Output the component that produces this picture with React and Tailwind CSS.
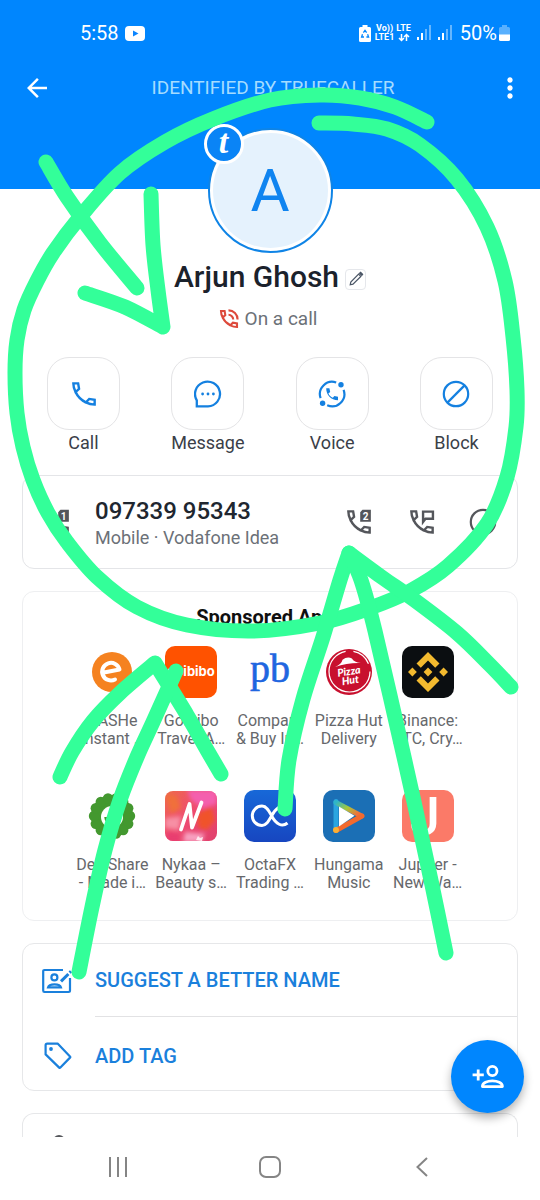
import React from "react";
import { MdArrowBack, MdMoreVert } from "react-icons/md";

/* ---------- icons ---------- */

function Handset({ children, className, strokeWidth = 1.8 }) {
  return (
    <svg viewBox="0 0 24 24" className={className} fill="none" stroke="currentColor" strokeWidth={strokeWidth} aria-hidden="true">
      <path d="M4 4H7.6L8.3 8.1L5.7 10.6C4.6 8.6 4 6.4 4 4Z" />
      <path d="M5.7 10.6C7.4 14.1 9.9 16.6 13.4 18.3" />
      <path d="M20 20V16.4L15.9 15.7L13.4 18.3C15.4 19.4 17.6 20 20 20Z" />
      {children}
    </svg>
  );
}

function SimHandset({ slot, className }) {
  return (
    <Handset className={className}>
      <path d="M14.6 2.9H20.9V11.8H12.9V4.6Z" fill="currentColor" stroke="none" />
      <text x="16.9" y="10.2" textAnchor="middle" fontFamily="Roboto, sans-serif" fontSize="7.5" fontWeight="700" fill="#fff" stroke="none">
        {slot}
      </text>
    </Handset>
  );
}

function MessageHandset({ className }) {
  return (
    <Handset className={className}>
      <path d="M12.8 12V4.2H20.2V9.6H14.6Z" />
    </Handset>
  );
}

function OnCallIcon({ className }) {
  return (
    <Handset className={className} strokeWidth={2.1}>
      <path d="M11.5 3.4A9 9 0 0 1 20.6 12.5M11.5 7.8A4.7 4.7 0 0 1 16.2 12.5" />
    </Handset>
  );
}

function BubbleIcon({ className }) {
  return (
    <svg viewBox="0 0 28 28" className={className} fill="none" stroke="currentColor" strokeWidth="2.3" aria-hidden="true">
      <path d="M2.8 26.4V20.4A12.5 12.4 0 1 1 14 26.4Z" />
      <g fill="currentColor" stroke="none">
        <circle cx="8.6" cy="14" r="1.4" />
        <circle cx="14" cy="14" r="1.4" />
        <circle cx="19.4" cy="14" r="1.4" />
      </g>
    </svg>
  );
}

function VoiceIcon({ className }) {
  return (
    <svg viewBox="0 0 28 28" className={className} fill="none" stroke="currentColor" strokeWidth="2.2" aria-hidden="true">
      <path d="M2.6 18.2A12.3 12.3 0 0 1 18.2 2.5M25.6 9.8A12.3 12.3 0 0 1 9.2 25.3" />
      <g fill="currentColor" stroke="none">
        <circle cx="23" cy="4.8" r="2.7" />
        <circle cx="4.6" cy="23.2" r="2.7" />
        <path d="M8.2 8.2H11.4L12.2 12L10.4 13.4C11.4 15.4 12.8 16.8 14.8 17.8L16.4 16L20 16.8V20.2C13 20 8.2 15 8.2 8.2Z" />
      </g>
    </svg>
  );
}

function BlockIcon({ className, strokeWidth = 2.2 }) {
  return (
    <svg viewBox="0 0 28 28" className={className} fill="none" stroke="currentColor" strokeWidth={strokeWidth} aria-hidden="true">
      <circle cx="14" cy="14" r="12.2" />
      <path d="M22.6 5.4L5.4 22.6" />
    </svg>
  );
}

function PencilIcon({ className }) {
  return (
    <svg viewBox="0 0 16 16" className={className} fill="none" stroke="currentColor" strokeWidth="1.2" aria-hidden="true">
      <path d="M2.2 13.8L2.8 11L10.6 3.2L12.8 5.4L5 13.2Z" />
      <path d="M11.6 2.2L12.6 1.4L14.6 3.4L13.8 4.4Z" fill="currentColor" />
    </svg>
  );
}

function SuggestIcon({ className }) {
  return (
    <svg viewBox="0 0 30 26" className={className} fill="none" stroke="currentColor" strokeWidth="2.2" aria-hidden="true">
      <path d="M21 2H2.5Q1.2 2 1.2 3.4V22.6Q1.2 24 2.5 24H26.5Q28 24 28 22.6V10" />
      <circle cx="12.4" cy="9.4" r="3" />
      <path d="M6 19.4C7 15.4 18 15.4 19 19.4Z" />
      <path d="M19 13.4L26.4 6" strokeWidth="3" />
      <path d="M27.6 4.6L29 3.2" strokeWidth="3" />
    </svg>
  );
}

function TagIcon({ className }) {
  return (
    <svg viewBox="0 0 28 28" className={className} fill="none" stroke="currentColor" strokeWidth="2.2" strokeLinejoin="round" aria-hidden="true">
      <path d="M3.2 1.6H13.6L26 14.4Q26.6 15 26 15.6L16.4 25.6Q15.8 26.2 15.2 25.6L1.6 12.4V3.2Q1.6 1.6 3.2 1.6Z" />
      <circle cx="7" cy="7" r="1.9" fill="currentColor" stroke="none" />
    </svg>
  );
}

function AddPersonIcon({ className }) {
  return (
    <svg viewBox="0 0 34 26" className={className} fill="none" stroke="currentColor" strokeWidth="2.8" aria-hidden="true">
      <path d="M7.2 5.4V16.4M1.6 10.9H12.8" />
      <circle cx="21.4" cy="7" r="4.6" />
      <path d="M11.4 22.6C11.4 15 31.4 15 31.4 22.6Z" strokeLinejoin="round" />
    </svg>
  );
}

function SignalIcon() {
  return (
    <svg viewBox="0 0 14 16" className="h-4 w-3.5" fill="#fff" aria-hidden="true">
      <rect x="0" y="12" width="2" height="3" />
      <rect x="4" y="8" width="2" height="7" />
      <rect x="8" y="4" width="2" height="11" opacity="0.4" />
      <rect x="12" y="0" width="2" height="15" opacity="0.4" />
    </svg>
  );
}

/* ---------- app logos ---------- */

function Logo({ children }) {
  return (
    <svg viewBox="0 0 52 52" className="size-[52px] overflow-visible" aria-hidden="true">
      {children}
    </svg>
  );
}

const scallops = Array.from({ length: 14 }, (_, i) => {
  const angle = (i / 14) * Math.PI * 2;
  return [26 + Math.cos(angle) * 18, 26 + Math.sin(angle) * 18];
});

const logos = {
  cashe: (
    <Logo>
      <circle cx="26" cy="26" r="20" fill="#f58220" />
      <path d="M18 26.5L33.5 23.5A8.8 8.8 0 1 0 29 33.5" fill="none" stroke="#fff" strokeWidth="4" strokeLinecap="round" strokeLinejoin="round" />
    </Logo>
  ),
  goibibo: (
    <Logo>
      <rect width="52" height="52" rx="10" fill="#ff5200" />
      <text x="26" y="30" textAnchor="middle" fontFamily="Inter, sans-serif" fontSize="13" fontWeight="700" fill="#fff">goibibo</text>
    </Logo>
  ),
  policy: (
    <Logo>
      <text x="26" y="36" textAnchor="middle" fontFamily="'Liberation Serif', serif" fontSize="40" fill="#1f66e0" stroke="#1f66e0" strokeWidth="0.6">pb</text>
    </Logo>
  ),
  pizza: (
    <Logo>
      <circle cx="26" cy="26" r="23" fill="#c8102e" />
      <circle cx="26.5" cy="25.5" r="20.5" fill="none" stroke="#fff" strokeWidth="1.2" strokeDasharray="92 8 20 9" />
      <g fill="#fff" transform="rotate(-9 26 26)">
        <path d="M13 19Q20 17 21.5 13Q26.5 10 31 13Q32.5 17 39 19Q26 16.5 13 19Z" />
        <text x="26" y="29" textAnchor="middle" fontFamily="Lato, sans-serif" fontSize="10.5" fontStyle="italic" fontWeight="900">Pizza</text>
        <text x="26" y="38" textAnchor="middle" fontFamily="Lato, sans-serif" fontSize="10.5" fontStyle="italic" fontWeight="900">Hut</text>
      </g>
    </Logo>
  ),
  binance: (
    <Logo>
      <rect width="52" height="52" rx="10" fill="#0b0e11" />
      <g fill="#f3ba2f">
        <path d="M26 6L37.5 17.5L33.2 21.8L26 14.6L18.8 21.8L14.5 17.5Z" />
        <path d="M26 46L37.5 34.5L33.2 30.2L26 37.4L18.8 30.2L14.5 34.5Z" />
        <path d="M26 21.6L30.4 26L26 30.4L21.6 26Z" />
        <path d="M10.4 21.6L14.8 26L10.4 30.4L6 26Z" />
        <path d="M41.6 21.6L46 26L41.6 30.4L37.2 26Z" />
      </g>
    </Logo>
  ),
  dealshare: (
    <Logo>
      <g fill="#43982f">
        <circle cx="26" cy="26" r="21" />
        {scallops.map(([cx, cy]) => (
          <circle key={`${cx},${cy}`} cx={cx} cy={cy} r="5.2" />
        ))}
      </g>
      <circle cx="26" cy="27" r="11" fill="#fff" />
      <path d="M26 20V27.5M20 27A6 6 0 1 0 26 21" fill="none" stroke="#43982f" strokeWidth="3.5" />
    </Logo>
  ),
  nykaa: (
    <Logo>
      <defs>
        <linearGradient id="nykaaBase" x1="0" y1="0" x2="1" y2="1">
          <stop offset="0" stopColor="#ef6a4c" />
          <stop offset="0.5" stopColor="#ee4a72" />
          <stop offset="1" stopColor="#e0406c" />
        </linearGradient>
        <filter id="nykaaSoft"><feGaussianBlur stdDeviation="2" /></filter>
        <clipPath id="nykaaClip"><rect y="1" width="52" height="50" rx="8" /></clipPath>
      </defs>
      <g clipPath="url(#nykaaClip)">
        <rect width="52" height="52" fill="url(#nykaaBase)" />
        <g filter="url(#nykaaSoft)">
          <path d="M22 0H52V14L38 18L26 10Z" fill="#f45fae" />
          <path d="M0 4L12 6L16 18L6 24Z" fill="#f0703a" />
          <path d="M32 24L46 16L50 30L42 40L34 38Z" fill="#f0522b" />
          <path d="M0 28L16 26L14 40L0 38Z" fill="#f78fa4" />
          <path d="M20 42L40 44L36 52H18Z" fill="#f8a0c0" />
          <path d="M2 42L14 44V52H2Z" fill="#e83e70" />
        </g>
        <path d="M31 50L33 46L35 48L38 47L37 51Z" fill="#ffe8ef" />
      </g>
      <path d="M16 39.5L24.5 14L27 37.5L36.5 12.5" fill="none" stroke="#fff" strokeWidth="3.8" strokeLinecap="round" strokeLinejoin="round" />
    </Logo>
  ),
  octa: (
    <Logo>
      <defs>
        <linearGradient id="octaBlue" x1="0" y1="0" x2="0" y2="1">
          <stop offset="0" stopColor="#1768d8" />
          <stop offset="1" stopColor="#1746c0" />
        </linearGradient>
      </defs>
      <rect width="52" height="52" rx="10" fill="url(#octaBlue)" />
      <path d="M43 17.5C38 13 31 19 27.5 26C24 32 22 35.5 18 35.5A9.7 9.7 0 1 1 18 16.1C23 16.1 25.5 22 28 26.5C32 34 38 37.5 43.5 33" fill="none" stroke="#fff" strokeWidth="3" />
    </Logo>
  ),
  hungama: (
    <Logo>
      <defs>
        <linearGradient id="hungamaTop" x1="0" y1="0" x2="1" y2="0.6">
          <stop offset="0" stopColor="#2fb5c8" />
          <stop offset="0.5" stopColor="#a6c83c" />
          <stop offset="1" stopColor="#f0713a" />
        </linearGradient>
      </defs>
      <rect width="52" height="52" rx="10" fill="#1b6fb5" />
      <path d="M13 11.5V40" stroke="#2aa5e0" strokeWidth="5" strokeLinecap="round" />
      <path d="M13 12.5L38.5 26" stroke="url(#hungamaTop)" strokeWidth="5" strokeLinecap="round" />
      <path d="M39 26L13 40.5" stroke="#f26a2e" strokeWidth="5" strokeLinecap="round" />
      <circle cx="13" cy="40" r="3" fill="#fbb034" />
      <path d="M16 16.5L31.5 25.8L16 36.5Z" fill="#fff" />
    </Logo>
  ),
  jupiter: (
    <Logo>
      <rect width="52" height="52" rx="10" fill="#fb7a68" />
      <text x="23" y="45" textAnchor="middle" fontFamily="Roboto, sans-serif" fontSize="54" fontWeight="500" fill="#fff">J</text>
    </Logo>
  ),
};

/* ---------- data ---------- */

const actions = [
  { label: "Call", icon: <Handset className="size-8" /> },
  { label: "Message", icon: <BubbleIcon className="size-7" /> },
  { label: "Voice", icon: <VoiceIcon className="size-7" /> },
  { label: "Block", icon: <BlockIcon className="size-7" /> },
];

const apps = [
  { logo: "cashe", lines: ["CASHe", "Instant …"] },
  { logo: "goibibo", lines: ["Goibibo", "Travel A…"] },
  { logo: "policy", lines: ["Compare", "& Buy In…"] },
  { logo: "pizza", lines: ["Pizza Hut", "Delivery"] },
  { logo: "binance", lines: ["Binance:", "BTC, Cry…"] },
  { logo: "dealshare", lines: ["DealShare", "- Made i…"] },
  { logo: "nykaa", lines: ["Nykaa –", "Beauty s…"] },
  { logo: "octa", lines: ["OctaFX", "Trading …"] },
  { logo: "hungama", lines: ["Hungama", "Music"] },
  { logo: "jupiter", lines: ["Jupiter -", "New Wa…"] },
];

/* Hand-drawn marker strokes; each entry is a list of smooth segments sharing corners. */
const strokes = [
  [[[427, 122], [395, 107], [360, 98], [320, 95], [270, 100], [213, 119], [165, 142], [120, 173], [80, 217], [53, 253], [37, 281], [24, 310], [17, 340], [15, 373], [17, 413], [23, 447], [33, 480], [48, 513], [67, 542], [97, 577], [137, 607], [187, 625], [253, 631], [320, 623], [370, 608], [410, 591], [448, 566], [487, 524], [507, 477], [516, 427], [517, 390], [513, 337], [505, 281], [487, 227], [457, 179], [420, 145], [387, 129], [353, 124], [319, 123]]],
  [[[46, 162], [67, 197], [100, 243], [137, 288]]],
  [[[151, 194], [153, 245], [158, 290], [163, 327]], [[163, 327], [125, 307], [85, 293]]],
  [[[60, 777], [72, 752], [93, 721], [120, 693], [155, 663]], [[155, 663], [163, 676], [187, 715], [207, 750], [221, 774]]],
  [[[176, 671], [153, 722], [137, 757], [120, 800], [105, 850], [92, 907], [79, 972]]],
  [[[285, 809], [289, 760], [303, 699], [323, 637], [340, 580], [349, 553]], [[349, 553], [383, 578], [413, 599], [457, 633], [490, 665], [511, 687]]],
  [[[349, 553], [361, 580], [375, 631], [404, 757], [418, 820], [432, 885], [446, 953]]],
];

function smooth(points) {
  return points.slice(0, -1).map((p1, i) => {
    const p0 = points[i - 1] || p1;
    const p2 = points[i + 1];
    const p3 = points[i + 2] || p2;
    const c1 = [p1[0] + (p2[0] - p0[0]) / 6, p1[1] + (p2[1] - p0[1]) / 6];
    const c2 = [p2[0] - (p3[0] - p1[0]) / 6, p2[1] - (p3[1] - p1[1]) / 6];
    return `C${c1.join(" ")} ${c2.join(" ")} ${p2.join(" ")}`;
  }).join("");
}

function MarkerOverlay() {
  return (
    <svg viewBox="0 0 540 1200" className="pointer-events-none absolute inset-x-0 top-0 z-20 w-full" fill="none" stroke="#33ff99" strokeWidth="15" strokeLinecap="round" strokeLinejoin="round" aria-hidden="true">
      {strokes.map((segments, i) => (
        <path key={i} d={`M${segments[0][0].join(" ")}${segments.map(smooth).join("")}`} />
      ))}
    </svg>
  );
}

/* ---------- sections ---------- */

function StatusBar() {
  return (
    <div className="flex h-16 items-center justify-between pt-0.5 pr-[30px] pl-20 text-white">
      <div className="flex items-center gap-1.5 text-xl leading-6">
        <span>5:58</span>
        <svg viewBox="0 0 20 15" className="h-[15px] w-5" aria-hidden="true">
          <rect width="20" height="15" rx="4" fill="#fff" />
          <path d="M8 4.5L13.5 7.5L8 10.5Z" fill="#0a84ff" />
        </svg>
      </div>
      <div className="flex items-center">
        <svg viewBox="0 0 12 17" className="mr-1 h-[17px] w-3" aria-hidden="true">
          <path d="M3.5 0H8.5V2H10.5Q12 2 12 3.5V15.5Q12 17 10.5 17H1.5Q0 17 0 15.5V3.5Q0 2 1.5 2H3.5Z" fill="#fff" />
          <path d="M4.4 7.6L6 5.4L7.6 7.6M8.6 9.2L9.6 12H7.4M5 12H2.6L3.5 9.2" fill="none" stroke="#0086fe" strokeWidth="1.3" />
        </svg>
        <div className="mr-0.5 text-center text-[9px] leading-[9px] font-bold">
          <div>Vo))</div>
          <div>LTE1</div>
        </div>
        <div className="mr-1.5 flex flex-col items-center text-[9px] leading-[9px] font-bold">
          <div>LTE</div>
          <svg viewBox="0 0 12 9" className="h-[9px] w-3" fill="none" stroke="#fff" strokeWidth="1.5" aria-hidden="true">
            <path d="M3.5 1V7.5M1 5L3.5 7.5L6 5M8.5 8V1.5M6 4L8.5 1.5L11 4" />
          </svg>
        </div>
        <div className="mr-2 flex gap-[7px]">
          <SignalIcon />
          <SignalIcon />
        </div>
        <span className="mr-0.5 text-xl leading-6">50%</span>
        <svg viewBox="0 0 11 16" className="h-4 w-[11px]" aria-hidden="true">
          <path d="M3 0H8V2H9.5Q11 2 11 3.5V10H0V3.5Q0 2 1.5 2H3Z" fill="#fff" opacity="0.35" />
          <path d="M0 9.5H11V14.5Q11 16 9.5 16H1.5Q0 16 0 14.5Z" fill="#fff" />
        </svg>
      </div>
    </div>
  );
}

function Header() {
  return (
    <header className="h-[189px] bg-[#0086fe]">
      <StatusBar />
      <div className="flex h-12 items-center justify-between pr-3.5 pl-[22px] text-white">
        <button type="button" aria-label="Back"><MdArrowBack className="size-[30px]" /></button>
        <h1 className="text-[19px] leading-6 text-[#a5dcff]">IDENTIFIED BY TRUECALLER</h1>
        <button type="button" aria-label="More options"><MdMoreVert className="size-8" /></button>
      </div>
    </header>
  );
}

function Profile() {
  return (
    <section className="-mt-[61px] flex flex-col items-center">
      <div className="relative size-[125px] rounded-full border-2 border-[#0f84e6] bg-white p-[3px]">
        <div className="flex size-full items-center justify-center rounded-full bg-[#e5f2fd] text-[60px] leading-none text-[#0f84f0]">A</div>
        <span className="absolute -top-1.5 -left-1.5 flex size-10 items-center justify-center rounded-full border-[3px] border-white bg-[#0a84f6] pb-1 font-['Liberation_Serif',serif] text-[34px] leading-none font-bold text-white italic">
          t
        </span>
      </div>
      <div className="mt-1.5 flex h-9 items-center gap-1.5">
        <h2 className="text-3xl leading-9 font-medium text-[#1b222c]">Arjun Ghosh</h2>
        <button type="button" aria-label="Edit name" className="mt-1 flex size-[21px] items-center justify-center rounded border border-gray-200 text-gray-600">
          <PencilIcon className="size-4" />
        </button>
      </div>
      <p className="mt-3 mr-1.5 flex items-center gap-1 text-[19px] leading-6 text-[#6c7178]">
        <OnCallIcon className="size-6 text-[#dd4a3c]" />
        On a call
      </p>
    </section>
  );
}

function Actions() {
  return (
    <nav className="mt-[26px] flex justify-between px-[47px]">
      {actions.map((a) => (
        <button key={a.label} type="button" className="flex w-[73px] flex-col items-center text-[18px] leading-[26px] text-[#3a4048]">
          <span className="flex size-[73px] items-center justify-center rounded-[22px] border border-[#e4e4e6] text-[#1480e0]">{a.icon}</span>
          <span>{a.label}</span>
        </button>
      ))}
    </nav>
  );
}

function PhoneCard() {
  return (
    <section className="mt-[19px] flex h-[94px] items-center rounded-xl border border-[#e4e5e8] pr-5 pl-[18px] text-[#54565b]">
      <button type="button" aria-label="Call with SIM 1"><SimHandset slot="1" className="size-8" /></button>
      <div className="ml-[22px] flex-1 pt-1">
        <p className="text-2xl leading-7 font-medium text-[#20262f]">097339 95343</p>
        <p className="text-[18px] leading-[26px] text-[#6c7178]">Mobile · Vodafone Idea</p>
      </div>
      <div className="flex items-center gap-[31px]">
        <button type="button" aria-label="Call with SIM 2"><SimHandset slot="2" className="size-8" /></button>
        <button type="button" aria-label="Send message"><MessageHandset className="size-8" /></button>
        <button type="button" aria-label="More calling options"><BlockIcon className="size-7" /></button>
      </div>
    </section>
  );
}

function Sponsored() {
  return (
    <section className="h-[330px] rounded-xl border border-[#eeeff1] px-[50px] pt-[13px]">
      <h3 className="text-center text-xl leading-6 font-bold text-[#101010]">Sponsored Apps</h3>
      <ul className="mt-[17px] grid grid-cols-5 gap-y-[42px]">
        {apps.map((app) => (
          <li key={app.logo}>
            <a href="#app" className="flex flex-col items-center">
              {logos[app.logo]}
              <span className="mt-3.5 text-center text-base leading-[18px] whitespace-nowrap text-[#66686c]">
                {app.lines[0]}
                <br />
                {app.lines[1]}
              </span>
            </a>
          </li>
        ))}
      </ul>
    </section>
  );
}

function Suggestions() {
  return (
    <section className="rounded-xl border border-[#e6e7e9] pl-[19px] text-xl font-medium text-[#1a80dc]">
      <button type="button" className="flex w-full items-center text-left">
        <SuggestIcon className="h-[26px] w-[30px]" />
        <span className="ml-[23px] flex h-[73px] flex-1 items-center border-b border-[#e2e2e4]">SUGGEST A BETTER NAME</span>
      </button>
      <button type="button" className="flex w-full items-center pt-1 text-left">
        <TagIcon className="ml-0.5 size-7" />
        <span className="ml-[23px] flex h-[69px] flex-1 items-center">ADD TAG</span>
      </button>
    </section>
  );
}

function SystemNav() {
  return (
    <nav className="grid h-[63px] grid-cols-3 items-center justify-items-center bg-white px-[42px] pb-1 text-[#858585]">
      <button type="button" aria-label="Recent apps">
        <svg viewBox="0 0 20 20" className="size-5" stroke="currentColor" strokeWidth="2" aria-hidden="true"><path d="M2 0V20M10 0V20M18 0V20" /></svg>
      </button>
      <button type="button" aria-label="Home">
        <svg viewBox="0 0 22 22" className="size-[22px]" fill="none" stroke="currentColor" strokeWidth="2" aria-hidden="true"><rect x="1" y="1" width="20" height="20" rx="6" /></svg>
      </button>
      <button type="button" aria-label="Back to previous app">
        <svg viewBox="0 0 12 20" className="h-5 w-3" fill="none" stroke="currentColor" strokeWidth="2" aria-hidden="true"><path d="M11 1L1.5 10L11 19" /></svg>
      </button>
    </nav>
  );
}

export default function App() {
  return (
    <div className="relative flex min-h-screen flex-col overflow-hidden bg-white font-[Roboto,sans-serif]">
      <Header />
      <main className="relative flex-1">
        <Profile />
        <Actions />
        <div className="flex flex-col gap-[22px] px-[22px]">
          <PhoneCard />
          <Sponsored />
          <Suggestions />
          <section className="h-6 overflow-hidden rounded-t-xl border border-b-0 border-[#e6e7e9] pt-[21px] pl-[30px]">
            <div className="size-3 rounded-full border-2 border-[#54565b]" />
          </section>
        </div>
        <button type="button" aria-label="Add contact" className="absolute right-4 bottom-6 flex size-[73px] items-center justify-center rounded-full bg-[#0086fe] text-white shadow-[0_5px_10px_rgba(0,0,0,0.3)]">
          <AddPersonIcon className="h-[26px] w-[34px]" />
        </button>
      </main>
      <SystemNav />
      <MarkerOverlay />
    </div>
  );
}
